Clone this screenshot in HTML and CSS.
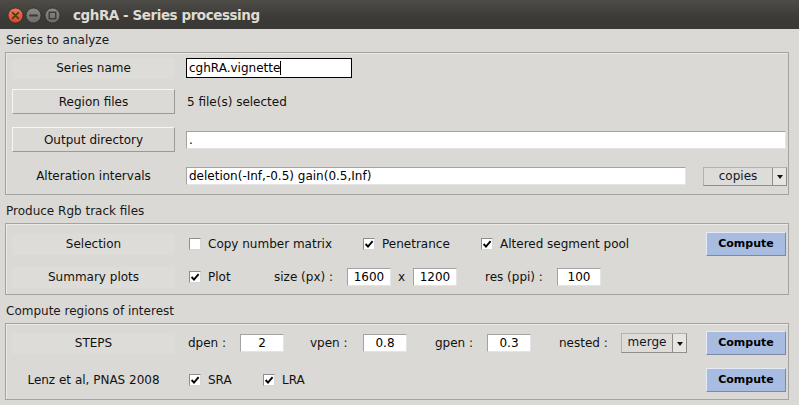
FILE: index.html
```html
<!DOCTYPE html>
<html>
<head>
<meta charset="utf-8">
<title>cghRA - Series processing</title>
<link rel="stylesheet" href="styles.css">
</head>
<body>
<div class="titlebar">
  <svg class="wbtns" width="70" height="29" viewBox="0 0 70 29">
    <defs>
      <linearGradient id="gc" x1="0" y1="0" x2="0" y2="1">
        <stop offset="0" stop-color="#f47a4e"/>
        <stop offset="1" stop-color="#dc4619"/>
      </linearGradient>
      <linearGradient id="gg" x1="0" y1="0" x2="0" y2="1">
        <stop offset="0" stop-color="#8c8b86"/>
        <stop offset="1" stop-color="#6b6a65"/>
      </linearGradient>
    </defs>
    <circle cx="15.5" cy="15.5" r="7.5" fill="url(#gc)" stroke="#2e2c28" stroke-width="0.8"/>
    <path d="M12.6 12.6 L18.4 18.4 M18.4 12.6 L12.6 18.4" stroke="#3c3b37" stroke-width="1.7" stroke-linecap="round"/>
    <circle cx="33.5" cy="15.5" r="7.5" fill="url(#gg)" stroke="#2e2d2a" stroke-width="0.8"/>
    <path d="M30 15.5 L37 15.5" stroke="#3c3b37" stroke-width="1.8" stroke-linecap="round"/>
    <circle cx="52.5" cy="15.5" r="7.5" fill="url(#gg)" stroke="#2e2d2a" stroke-width="0.8"/>
    <rect x="49.3" y="12.3" width="6.4" height="6.4" fill="none" stroke="#3c3b37" stroke-width="1.4"/>
  </svg>
  <span class="wtitle">cghRA - Series processing</span>
</div>

<div class="section-title">Series to analyze</div>
<div class="frame f1">
  <div class="row r24">
    <div class="lbl boxed">Series name</div>
    <div class="entry focus w-series">cghRA.vignette<span class="caret"></span></div>
  </div>
  <div class="row r25 gap9">
    <div class="btn">Region files</div>
    <span class="files">5 file(s) selected</span>
  </div>
  <div class="row r25 gap13">
    <div class="btn">Output directory</div>
    <div class="entry w-out">.</div>
  </div>
  <div class="row r24 gap12">
    <div class="lbl">Alteration intervals</div>
    <div class="entry w-alt">deletion(-Inf,-0.5) gain(0.5,Inf)</div>
    <div class="menubtn w-copies"><span class="val">copies</span><span class="arr"><i></i></span></div>
  </div>
</div>

<div class="section-title mt">Produce Rgb track files</div>
<div class="frame f2">
  <div class="row r26">
    <div class="lbl boxed">Selection</div>
    <label class="check w174 first"><span class="box"></span>Copy number matrix</label>
    <label class="check w118"><span class="box on"><svg width="10" height="10" viewBox="0 0 10 10"><path d="M1.6 5 L4 7.6 L8.6 2.2" fill="none" stroke="#000" stroke-width="1.9"/></svg></span>Penetrance</label>
    <label class="check"><span class="box on"><svg width="10" height="10" viewBox="0 0 10 10"><path d="M1.6 5 L4 7.6 L8.6 2.2" fill="none" stroke="#000" stroke-width="1.9"/></svg></span>Altered segment pool</label>
    <div class="compute">Compute</div>
  </div>
  <div class="row r26 gap7">
    <div class="lbl boxed">Summary plots</div>
    <label class="check w85 first"><span class="box on"><svg width="10" height="10" viewBox="0 0 10 10"><path d="M1.6 5 L4 7.6 L8.6 2.2" fill="none" stroke="#000" stroke-width="1.9"/></svg></span>Plot</label>
    <span class="cap w73">size (px) :</span>
    <div class="entry num">1600</div>
    <span class="cap x">x</span>
    <div class="entry num">1200</div>
    <span class="cap w72 ml28">res (ppi) :</span>
    <div class="entry num">100</div>
  </div>
</div>

<div class="section-title mt">Compute regions of interest</div>
<div class="frame f3">
  <div class="row r26">
    <div class="lbl boxed">STEPS</div>
    <span class="cap w52 ml13">dpen :</span>
    <div class="entry num">2</div>
    <span class="cap w53 ml26">vpen :</span>
    <div class="entry num">0.8</div>
    <span class="cap w52 ml28">gpen :</span>
    <div class="entry num">0.3</div>
    <span class="cap w62 ml28">nested :</span>
    <div class="menubtn w-merge"><span class="val">merge</span><span class="arr"><i></i></span></div>
    <div class="compute">Compute</div>
  </div>
  <div class="row r26 gap11">
    <div class="lbl">Lenz et al, PNAS 2008</div>
    <label class="check w74 first"><span class="box on"><svg width="10" height="10" viewBox="0 0 10 10"><path d="M1.6 5 L4 7.6 L8.6 2.2" fill="none" stroke="#000" stroke-width="1.9"/></svg></span>SRA</label>
    <label class="check"><span class="box on"><svg width="10" height="10" viewBox="0 0 10 10"><path d="M1.6 5 L4 7.6 L8.6 2.2" fill="none" stroke="#000" stroke-width="1.9"/></svg></span>LRA</label>
    <div class="compute">Compute</div>
  </div>
</div>
</body>
</html>
```

FILE: styles.css
```css
* { box-sizing: border-box; }

html, body {
  margin: 0;
  padding: 0;
}

body {
  width: 799px;
  height: 405px;
  overflow: hidden;
  background: #dad9d5;
  font-family: "DejaVu Sans", sans-serif;
  font-size: 12px;
  color: #111;
}

/* window title bar */
.titlebar {
  height: 29px;
  display: flex;
  align-items: center;
  background: linear-gradient(#4d4c47, #3c3b37 60%, #393834);
}
.wbtns { display: block; flex: none; }
.wtitle {
  margin-left: 3px;
  color: #dfdbd2;
  font-weight: bold;
  font-size: 13.5px;
  letter-spacing: -0.45px;
  line-height: 16px;
  padding-top: 1px;
}

/* section headings */
.section-title {
  height: 23px;
  padding: 3px 0 4px 6px;
  line-height: 16px;
  color: #1a1a1a;
}
.section-title.mt { margin-top: 5px; }

/* label frames */
.frame {
  margin-left: 5px;
  width: 784px;
  border: 1px solid #a4a39f;
  box-shadow: inset 1px 1px 0 #eceae6;
  padding: 0 2px 0 6px;
}
.f1 { padding-top: 3px; padding-bottom: 6px; }
.f2 { padding-top: 7px; padding-bottom: 4px; }
.f3 { padding-top: 6px; padding-bottom: 6px; }

.row {
  display: flex;
  align-items: center;
}
.r24 { height: 24px; }
.r25 { height: 25px; }
.r26 { height: 26px; }
.gap7 { margin-top: 7px; }
.gap9 { margin-top: 9px; }
.gap11 { margin-top: 11px; }
.gap12 { margin-top: 12px; }
.gap13 { margin-top: 13px; }

/* left column labels and buttons */
.lbl, .btn {
  flex: none;
  width: 163px;
  text-align: center;
  line-height: 16px;
}
.lbl.boxed {
  height: 21px;
  padding-top: 2px;
  background: #dedcd8;
}
.btn {
  height: 25px;
  padding-top: 4px;
  border: 1px solid;
  border-color: #f7f6f3 #9b9a96 #9b9a96 #f7f6f3;
  background: #dcdad6;
}

/* entries */
.entry {
  flex: none;
  height: 18px;
  background: #fff;
  border: 1px solid;
  border-color: #a3a3a3 #e4e4e4 #e4e4e4 #a3a3a3;
  line-height: 16px;
  padding-left: 2px;
  white-space: nowrap;
  color: #000;
}
.entry.focus {
  height: 20px;
  border: 1px solid #000;
  padding-top: 1px;
}
.caret {
  display: inline-block;
  width: 1px;
  height: 14px;
  background: #000;
  vertical-align: -3px;
}
.w-series { width: 166px; margin-left: 11px; }
.w-out { width: 600px; margin-left: 11px; }
.w-alt { width: 500px; margin-left: 11px; }
.entry.num {
  width: 44px;
  padding-left: 0;
  text-align: center;
}

.files { margin-left: 12px; line-height: 16px; }

/* option menus */
.menubtn {
  flex: none;
  display: flex;
  border: 1px solid;
  border-color: #b2b1ad #8f8e8a #8f8e8a #b2b1ad;
  background: #dedcd8;
}
.menubtn .val {
  flex: 1;
  text-align: center;
  line-height: 16px;
  color: #101828;
}
.menubtn .arr {
  width: 14px;
  border-left: 1px solid #8f8e8a;
  background: #e6e5e1;
  display: flex;
  align-items: center;
  justify-content: center;
}
.menubtn .arr i {
  width: 0;
  height: 0;
  border-left: 3.5px solid transparent;
  border-right: 3.5px solid transparent;
  border-top: 4px solid #111;
  margin-top: 1px;
}
.w-copies { width: 84px; height: 19px; margin-left: 17px; }
.w-merge { width: 66px; height: 20px; }

/* check buttons */
.check {
  flex: none;
  display: flex;
  align-items: center;
  gap: 7px;
  line-height: 16px;
}
.check.first { margin-left: 14px; }
.check .box {
  flex: none;
  width: 12px;
  height: 12px;
  background: #fff;
  border: 1px solid;
  border-color: #8e8e8e #d6d6d6 #d6d6d6 #8e8e8e;
  display: flex;
  align-items: center;
  justify-content: center;
}
.w174 { width: 174px; }
.w118 { width: 118px; }
.w85 { width: 85px; }
.w74 { width: 74px; }

/* inline captions */
.cap { flex: none; line-height: 16px; }
.w73 { width: 73px; }
.w72 { width: 72px; }
.w52 { width: 52px; }
.w53 { width: 53px; }
.w62 { width: 62px; }
.cap.x { width: 15px; margin-left: 7px; }
.ml13 { margin-left: 13px; }
.ml26 { margin-left: 26px; }
.ml28 { margin-left: 28px; }

/* compute buttons */
.compute {
  flex: none;
  margin-left: auto;
  width: 80px;
  height: 24px;
  background: #a7bce0;
  border: 1px solid;
  border-color: #e4ebf7 #7c89a2 #7c89a2 #e4ebf7;
  font-weight: bold;
  font-size: 11px;
  line-height: 16px;
  padding-top: 3px;
  text-align: center;
  color: #000;
}
```
